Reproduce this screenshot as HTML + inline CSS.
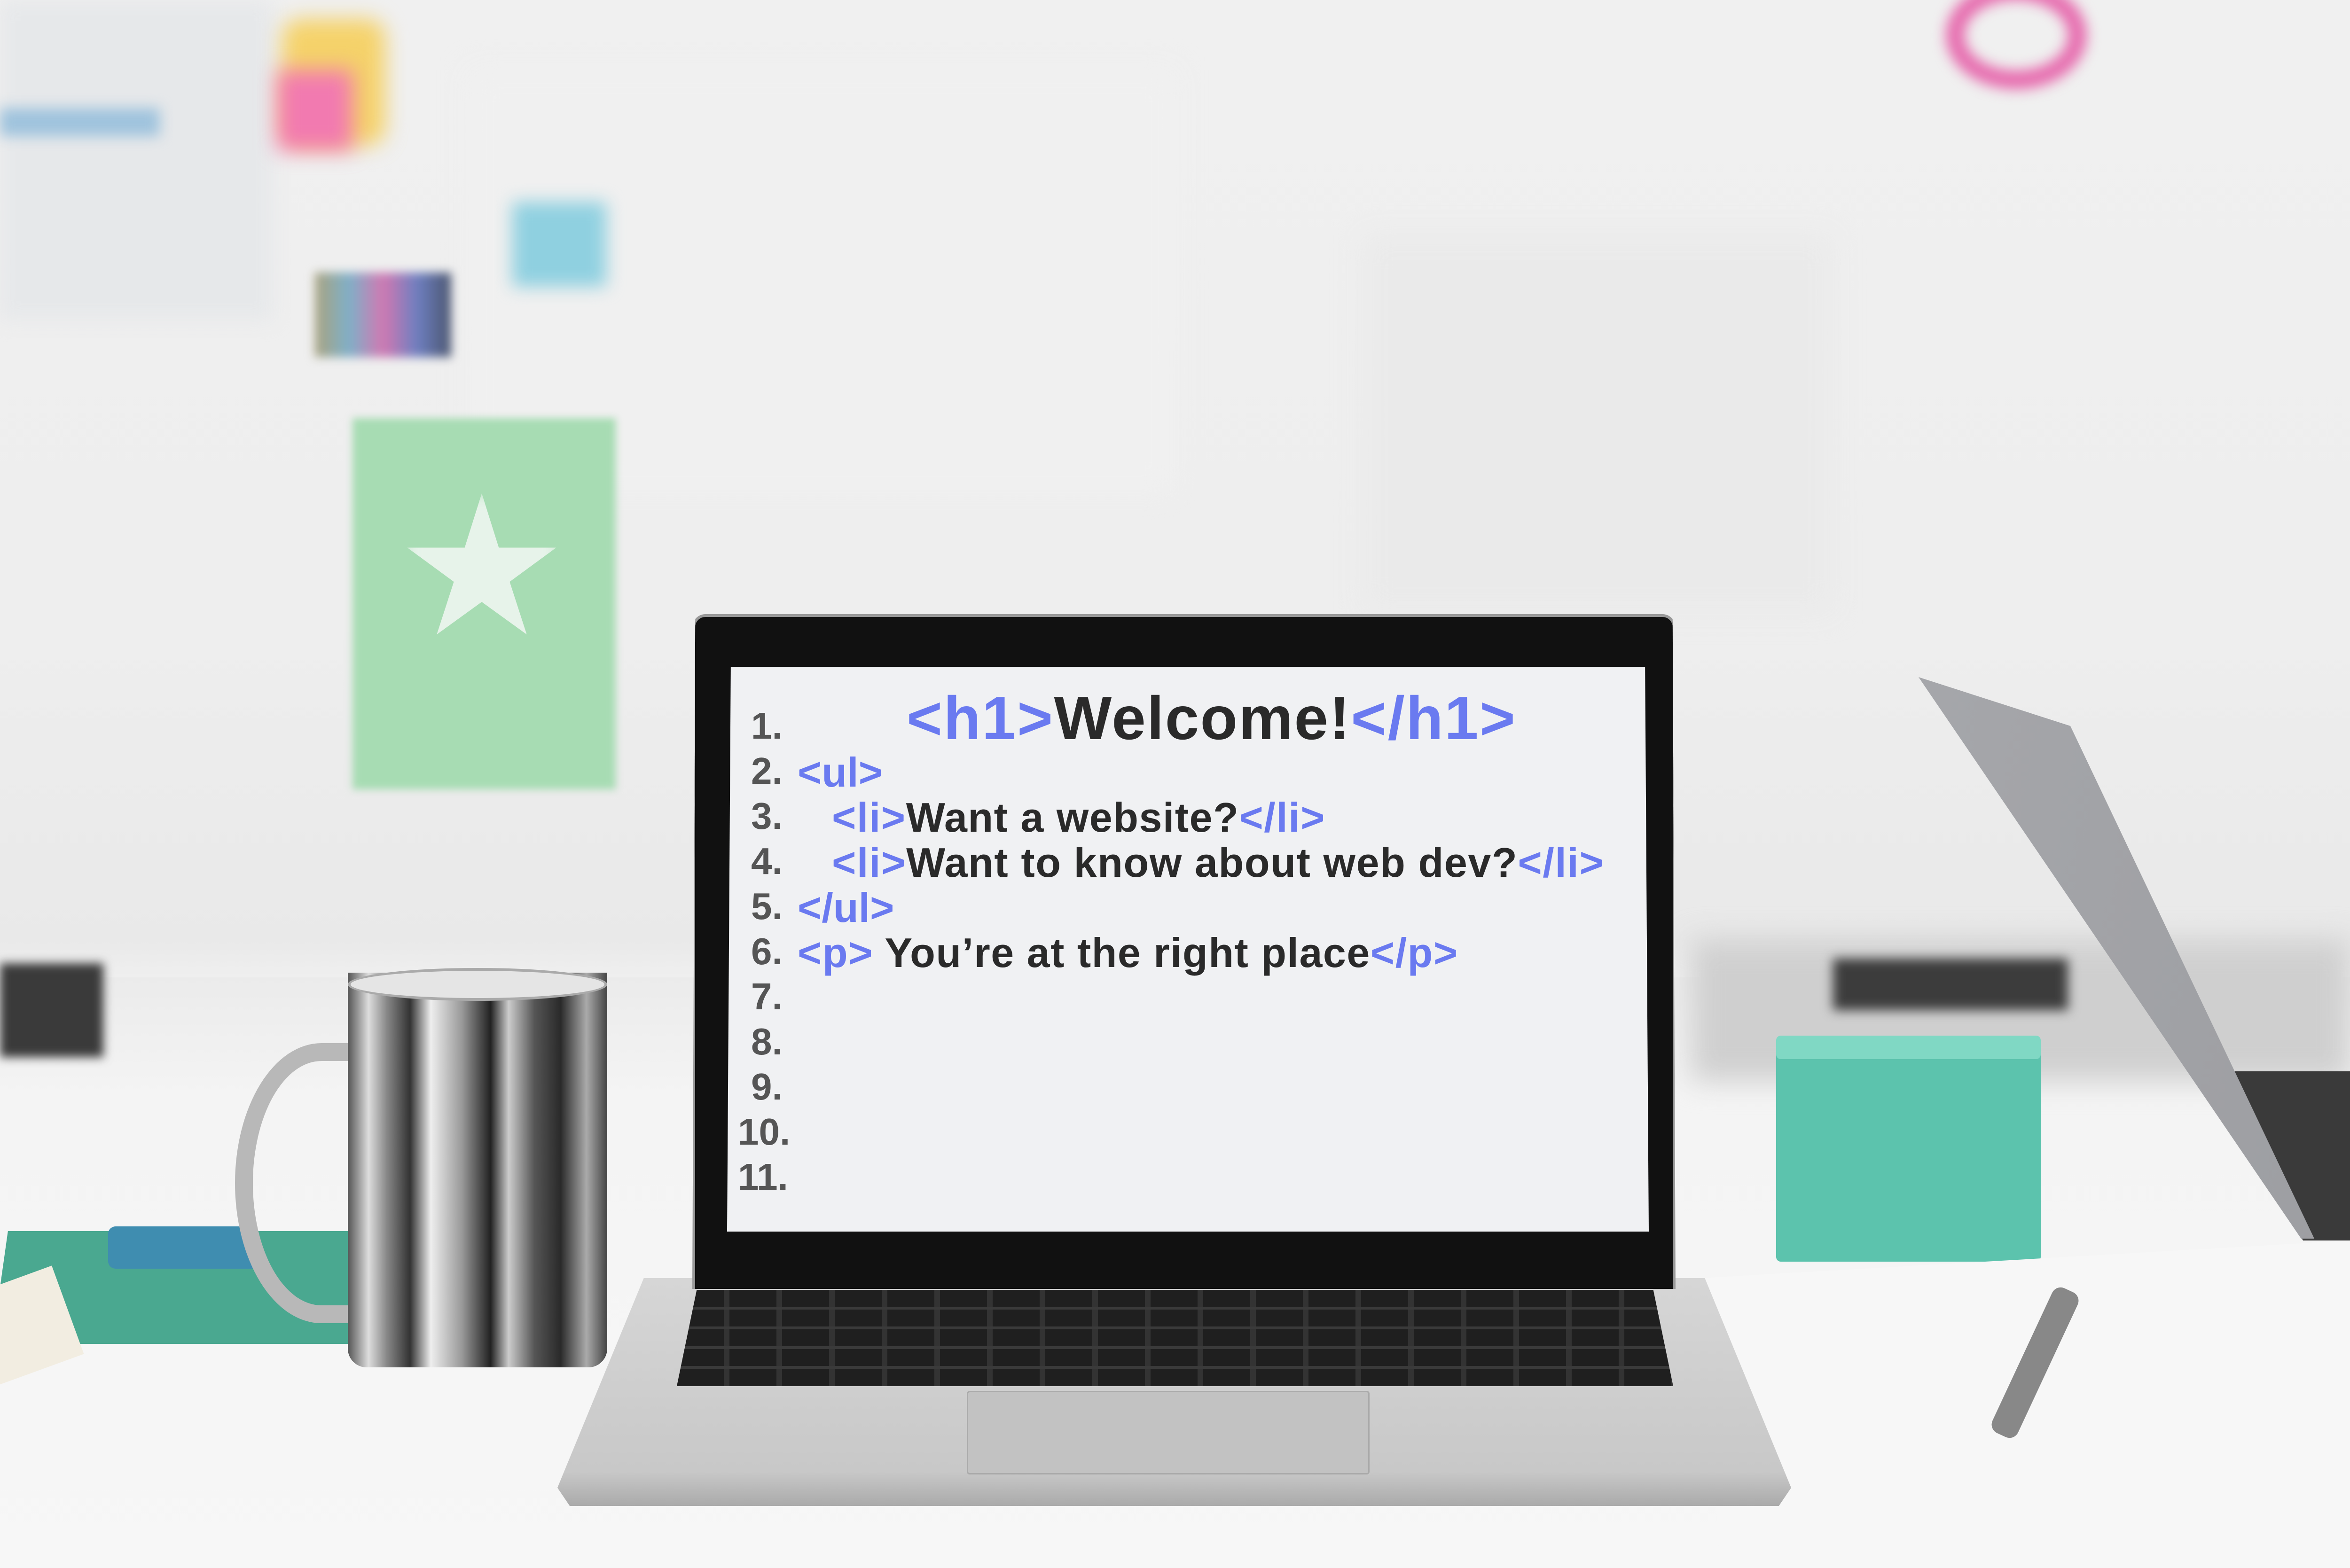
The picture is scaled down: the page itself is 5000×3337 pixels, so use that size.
<!DOCTYPE html>
<html><head><meta charset="utf-8"><style>
html{margin:0;padding:0;width:5000px;height:3337px;overflow:hidden}
body{margin:0;padding:0;width:5000px;height:3337px;position:relative;overflow:hidden;background:linear-gradient(#f0f0f0 0%,#eeeeee 40%,#e9e9e9 60%,#f1f1f1 63%,#f4f4f4 100%);font-family:"Liberation Sans",sans-serif}
.a{position:absolute}
.t{position:absolute;white-space:nowrap;font-weight:bold;line-height:1}
.b{color:#6a7af0}.k{color:#2a2a2a}.n{color:#555}
</style></head><body>
<div class="a" style="left:0;top:0;width:580px;height:680px;background:#e6e8ea;filter:blur(20px)"></div>
<div class="a" style="left:1000px;top:150px;width:1500px;height:900px;background:#f0f0f0;filter:blur(30px)"></div>
<div class="a" style="left:2900px;top:500px;width:1000px;height:800px;background:#eaeaea;filter:blur(30px)"></div>
<div class="a" style="left:0;top:230px;width:340px;height:60px;background:#9fc3dd;filter:blur(14px)"></div>
<div class="a" style="left:600px;top:40px;width:220px;height:270px;background:#f5d26a;filter:blur(22px);border-radius:40px"></div>
<div class="a" style="left:590px;top:150px;width:160px;height:170px;background:#f27ab0;filter:blur(22px)"></div>
<div class="a" style="left:1090px;top:430px;width:200px;height:180px;background:#8fd0e0;filter:blur(18px)"></div>
<div class="a" style="left:670px;top:580px;width:290px;height:180px;background:linear-gradient(90deg,#a9a27f,#7fb0c8,#d079b2,#6e7fc0,#4b5670);filter:blur(10px)"></div>
<div class="a" style="left:4140px;top:-40px;width:220px;height:150px;border:40px solid #e66bae;border-radius:50%;filter:blur(14px)"></div>
<div class="a" style="left:750px;top:890px;width:560px;height:790px;background:#a7dcb3;filter:blur(8px)"></div>
<div class="a" style="left:860px;top:1050px;width:330px;height:330px;background:#e7f3ea;filter:blur(16px);clip-path:polygon(50% 0,61% 35%,98% 35%,68% 57%,79% 91%,50% 70%,21% 91%,32% 57%,2% 35%,39% 35%)"></div>
<div class="a" style="left:0;top:2080px;width:5000px;height:1257px;background:linear-gradient(#ebebeb,#f4f4f4 20%,#f7f7f7)"></div>
<div class="a" style="left:0;top:2050px;width:220px;height:200px;background:#3a3a3a;filter:blur(10px)"></div>
<div class="a" style="left:3600px;top:2000px;width:1400px;height:300px;background:#cfcfcf;filter:blur(30px)"></div>
<div class="a" style="left:3900px;top:2040px;width:500px;height:110px;background:#3c3c3c;filter:blur(12px)"></div>
<div class="a" style="left:0;top:2620px;width:770px;height:240px;background:#4aa890;transform:skewX(-8deg)"></div>
<div class="a" style="left:230px;top:2610px;width:320px;height:90px;background:#3f8db0;border-radius:16px"></div>
<div class="a" style="left:-40px;top:2720px;width:190px;height:200px;background:#f2ede1;transform:rotate(-20deg)"></div>
<div class="a" style="left:500px;top:2220px;width:330px;height:520px;border:38px solid #b8b8b8;border-radius:50% 0 0 50%;border-right:none"></div>
<div class="a" style="left:740px;top:2070px;width:552px;height:840px;border-radius:0 0 40px 40px;background:linear-gradient(90deg,#555 0%,#ddd 8%,#888 15%,#333 24%,#eee 32%,#999 44%,#222 55%,#ccc 62%,#555 72%,#2a2a2a 82%,#aaa 92%,#444 100%)"></div>
<div class="a" style="left:740px;top:2060px;width:552px;height:70px;border-radius:50%;background:#e5e5e5;border:6px solid #aaa;box-sizing:border-box"></div>
<div class="a" style="left:0;top:0;width:5000px;height:3337px;background:#3a3a3a;clip-path:polygon(4700px 2280px,5000px 2280px,5000px 2640px,4900px 2640px)"></div>
<div class="a" style="left:0;top:0;width:5000px;height:3337px;background:linear-gradient(100deg,#8f9094,#b5b6ba 40%,#9c9da1);clip-path:polygon(4082px 1441px,4405px 1545px,4924px 2636px,4896px 2636px)"></div>
<div class="a" style="left:3779px;top:2230px;width:563px;height:455px;background:#5cc3ad;border-radius:10px"></div>
<div class="a" style="left:3779px;top:2204px;width:563px;height:50px;background:#80d8c4;border-radius:10px"></div>
<div class="a" style="left:0;top:0;width:5000px;height:3337px;background:#f7f7f7;clip-path:polygon(3620px 2720px,5000px 2640px,5000px 3337px,3660px 3337px)"></div>
<div class="a" style="left:4300px;top:2730px;width:60px;height:340px;background:#888;transform:rotate(25deg);border-radius:20px"></div>
<div class="a" style="left:1186px;top:2720px;width:2625px;height:485px;background:linear-gradient(#d6d6d6,#c8c8c8 85%,#aaa);clip-path:polygon(7% 0,93% 0,100% 92%,99% 100%,1% 100%,0 92%)"></div>
<div class="a" style="left:1440px;top:2745px;width:2120px;height:205px;background:#1f1f1f;clip-path:polygon(2% 0,98% 0,100% 100%,0 100%);background-image:repeating-linear-gradient(90deg,#111 0 100px,#333 100px 112px),repeating-linear-gradient(#111 0 36px,#3a3a3a 36px 42px);background-blend-mode:lighten"></div>
<div class="a" style="left:2057px;top:2960px;width:851px;height:172px;background:#c2c2c2;border:3px solid #aaa;border-radius:6px"></div>
<div class="a" style="left:1473px;top:1307px;width:2092px;height:1436px;background:#111;border-radius:28px 28px 0 0;border:6px solid #999;border-bottom:none;box-sizing:border-box;clip-path:polygon(0.3% 0,99.7% 0,100% 100%,0 100%)"></div>
<div class="a" style="left:1547px;top:1419px;width:1961px;height:1202px;background:#f0f1f3;clip-path:polygon(0.4% 0,99.6% 0,100% 100%,0 100%)"></div>
<div class="t n" style="left:1598px;top:1505px;font-size:80px">1.</div>
<div class="t n" style="left:1598px;top:1601px;font-size:80px">2.</div>
<div class="t n" style="left:1598px;top:1697px;font-size:80px">3.</div>
<div class="t n" style="left:1598px;top:1793px;font-size:80px">4.</div>
<div class="t n" style="left:1598px;top:1889px;font-size:80px">5.</div>
<div class="t n" style="left:1598px;top:1985px;font-size:80px">6.</div>
<div class="t n" style="left:1598px;top:2081px;font-size:80px">7.</div>
<div class="t n" style="left:1598px;top:2177px;font-size:80px">8.</div>
<div class="t n" style="left:1598px;top:2273px;font-size:80px">9.</div>
<div class="t n" style="left:1570px;top:2369px;font-size:80px">10.</div>
<div class="t n" style="left:1570px;top:2465px;font-size:80px">11.</div>
<div class="t" style="left:1929px;top:1463px;font-size:130px;letter-spacing:2.5px"><span class="b">&lt;h1&gt;</span><span class="k">Welcome!</span><span class="b">&lt;/h1&gt;</span></div>
<div class="t b" style="left:1697px;top:1600px;font-size:88px">&lt;ul&gt;</div>
<div class="t" style="left:1770px;top:1696px;font-size:88px;letter-spacing:1.5px"><span class="b">&lt;li&gt;</span><span class="k">Want a website?</span><span class="b">&lt;/li&gt;</span></div>
<div class="t" style="left:1770px;top:1792px;font-size:88px;letter-spacing:1.6px"><span class="b">&lt;li&gt;</span><span class="k">Want to know about web dev?</span><span class="b">&lt;/li&gt;</span></div>
<div class="t b" style="left:1697px;top:1888px;font-size:88px">&lt;/ul&gt;</div>
<div class="t" style="left:1697px;top:1984px;font-size:88px;letter-spacing:1.5px"><span class="b">&lt;p&gt;</span><span class="k"> You’re at the right place</span><span class="b">&lt;/p&gt;</span></div>
</body></html>
